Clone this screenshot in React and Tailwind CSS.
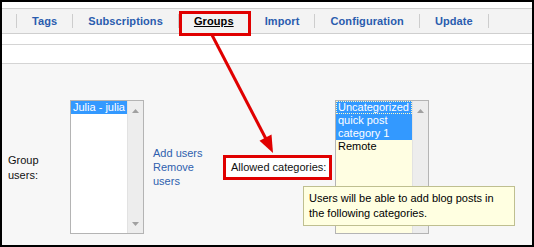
import React from "react";

const Tab = ({ children, active }) => (
  <span
    className={
      "px-[15px] text-[11px] font-bold leading-[14px] tracking-[0.1px] " +
      (active ? "text-black underline" : "text-[#2a5cae]")
    }
  >
    {children}
  </span>
);

const Sep = () => <span className="w-px h-[14px] bg-[#cdcdcd]" />;

const UpArrow = () => (
  <svg width="7" height="4" viewBox="0 0 7 4">
    <polygon points="0,4 7,4 3.5,0" fill="#a0a0a0" />
  </svg>
);
const DownArrow = () => (
  <svg width="7" height="4" viewBox="0 0 7 4">
    <polygon points="0,0 7,0 3.5,4" fill="#a0a0a0" />
  </svg>
);

const Scrollbar = () => (
  <div className="w-[16px] bg-[#ededed] border-l border-[#e2e2e2] flex flex-col items-center justify-between pt-[8px] pb-[7px]">
    <UpArrow />
    <DownArrow />
  </div>
);

export default function App() {
  return (
    <div
      className="relative w-[534px] h-[247px] overflow-hidden bg-white"
      style={{ fontFamily: '"Liberation Sans", Arial, sans-serif' }}
    >
      <div className="w-full h-full border-2 border-black flex flex-col">
        <div className="h-[6px] bg-white" />
        <div className="h-[26px] border-t border-b border-[#cfcfcf] bg-[#f3f3f3] flex items-center pl-[14px]">
          <Sep />
          <Tab>Tags</Tab>
          <Sep />
          <Tab>Subscriptions</Tab>
          <Sep />
          <Tab active>Groups</Tab>
          <Sep />
          <Tab>Import</Tab>
          <Sep />
          <Tab>Configuration</Tab>
          <Sep />
          <Tab>Update</Tab>
          <Sep />
        </div>
        <div className="h-[11px] border-b border-[#d4d4d4] bg-white" />
        <div className="h-[19px] border-b border-[#d4d4d4] bg-white" />
        <div className="flex-1 bg-[#f7f7f7] pt-[36px] pl-[6px]">
          <div className="flex items-center h-[134px] text-[11px]">
            <div className="w-[62px] leading-[15px] text-[#111] pt-[1px]">
              Group
              <br />
              users:
            </div>
            <div className="w-[74px] h-[134px] border border-[#b4b4b4] bg-white flex">
              <div className="flex-1 leading-[13px]">
                <div className="bg-[#3399ff] text-white pl-[2px]">Julia - julia</div>
              </div>
              <Scrollbar />
            </div>
            <div className="ml-[9px] w-[70px] leading-[14px] text-[#2f5fae]">
              <div>Add users</div>
              <div>
                Remove
                <br />
                users
              </div>
            </div>
            <div className="w-[109px] h-[25px] border-[3px] border-[#e00000] flex items-center pl-[5px] text-[#111] bg-white">
              Allowed categories:
            </div>
            <div className="ml-[3px] w-[94px] h-[134px] border border-[#b4b4b4] bg-[#fffee2] flex">
              <div className="flex-1 leading-[13px] overflow-hidden">
                <div className="bg-[#3399ff] text-white pl-[2px] outline-1 outline-dotted outline-[#fff8c0] -outline-offset-1 whitespace-nowrap">
                  Uncategorized
                </div>
                <div className="bg-[#3399ff] text-white pl-[2px]">quick post</div>
                <div className="bg-[#3399ff] text-white pl-[2px]">category 1</div>
                <div className="text-black pl-[2px]">Remote</div>
              </div>
              <Scrollbar />
            </div>
          </div>
        </div>
      </div>

      {/* Groups annotation box */}
      <div className="absolute left-[179px] top-[11px] w-[72px] h-[25px] border-[3px] border-[#e00000]" />

      {/* Arrow */}
      <svg className="absolute left-0 top-0" width="534" height="247" viewBox="0 0 534 247">
        <line x1="212" y1="35" x2="266" y2="139" stroke="#e00000" strokeWidth="3" />
        <polygon points="273,153 271.5,134.5 259.5,140.8" fill="#e00000" />
      </svg>

      {/* Tooltip */}
      <div className="absolute left-[303px] top-[186px] w-[212px] h-[40px] border border-[#bfbf90] bg-[#ffffe1] px-[5px] pt-[4px] text-[11px] leading-[15px] text-black">
        Users will be able to add blog posts in
        <br />
        the following categories.
      </div>
    </div>
  );
}
